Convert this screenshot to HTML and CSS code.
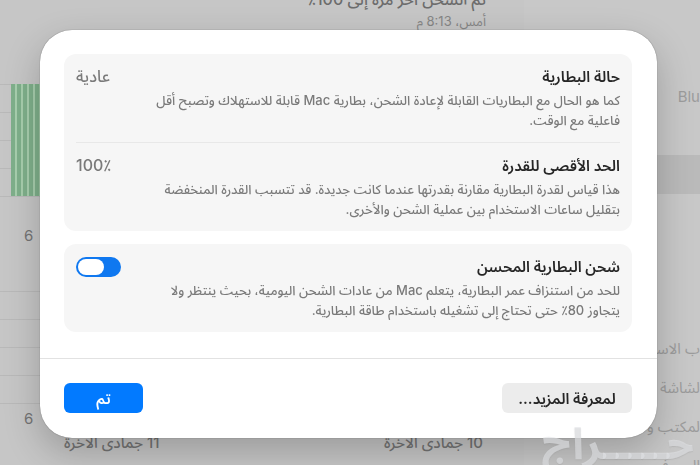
FILE: index.html
```html
<!DOCTYPE html>
<html lang="ar" dir="rtl">
<head>
    <meta charset="UTF-8">
    <meta name="viewport" content="width=device-width, initial-scale=1.0">
    <title>صحة البطارية</title>
    <link rel="stylesheet" href="styles.css">
</head>
<body>
    <div class="window">
        <nav class="sidebar">
            <ul class="group">
                <li class="item">Blu</li>
                <li class="item"></li>
                <li class="item selected"></li>
            </ul>
            <ul class="group group-wide">
                <li class="item">ب الاستخدام</li>
                <li class="item">لشاشة</li>
                <li class="item">لمكتب و</li>
                <li class="item">السيرفر</li>
            </ul>
        </nav>
        <main class="content">
            <div class="last-charge">تم الشحن آخر مرة إلى 100٪</div>
            <div class="last-time">أمس، 8:13 م</div>
            <div class="chart chart-level">
                <div class="bars"></div>
            </div>
            <div class="hours">6</div>
            <div class="chart chart-usage"></div>
            <div class="hours">6</div>
            <div class="dates">
                <span>10 جمادى الآخرة</span>
                <span>11 جمادى الآخرة</span>
            </div>
        </main>
    </div>

    <div class="overlay">
        <div class="dialog" role="dialog" aria-label="صحة البطارية">
            <div class="dialog-body">
                <section class="card">
                    <div class="row">
                        <div class="row-head">
                            <h2 class="title">حالة البطارية</h2>
                            <span class="value">عادية</span>
                        </div>
                        <p class="text">كما هو الحال مع البطاريات القابلة لإعادة الشحن، بطارية Mac قابلة للاستهلاك وتصبح أقل<br>فاعلية مع الوقت.</p>
                    </div>
                    <div class="row">
                        <div class="row-head">
                            <h2 class="title">الحد الأقصى للقدرة</h2>
                            <span class="value">100٪</span>
                        </div>
                        <p class="text">هذا قياس لقدرة البطارية مقارنة بقدرتها عندما كانت جديدة. قد تتسبب القدرة المنخفضة<br>بتقليل ساعات الاستخدام بين عملية الشحن والأخرى.</p>
                    </div>
                </section>
                <section class="card">
                    <div class="row">
                        <div class="row-head">
                            <label class="title" for="optimized">شحن البطارية المحسن</label>
                            <input class="switch" type="checkbox" id="optimized" checked>
                        </div>
                        <p class="text">للحد من استنزاف عمر البطارية، يتعلم Mac من عادات الشحن اليومية، بحيث ينتظر ولا<br>يتجاوز 80٪ حتى تحتاج إلى تشغيله باستخدام طاقة البطارية.</p>
                    </div>
                </section>
            </div>
            <div class="dialog-footer">
                <button class="btn btn-more" type="button">لمعرفة المزيد...</button>
                <button class="btn btn-done" type="button">تم</button>
            </div>
        </div>
    </div>

    <div class="watermark">حـــــراج</div>
</body>
</html>
```

FILE: styles.css
```css
* {
    margin: 0;
    padding: 0;
    box-sizing: border-box;
}

body {
    font-family: Inter, "Noto Sans Arabic", "DejaVu Sans", sans-serif;
    font-size: 15px;
    height: 100vh;
    overflow: hidden;
    background: #c6c6c6;
    color: #747474;
}

.window {
    display: flex;
    height: 100vh;
    overflow: hidden;
}

/* sidebar */
.sidebar {
    width: 176px;
    flex-shrink: 0;
    padding-top: 77px;
    background: #c8c8c8;
}

.group {
    list-style: none;
}

.group-wide {
    padding-top: 135px;
}

.item {
    height: 39px;
    line-height: 39px;
    font-size: 15px;
    color: #9c9c9c;
    white-space: nowrap;
}

.selected {
    background: #bababa;
}

/* battery page behind the dialog */
.content {
    flex: 1;
    min-width: 0;
}

.last-charge {
    height: 24px;
    line-height: 24px;
    margin-top: -13px;
    padding-right: 38px;
    font-size: 16px;
    font-weight: 500;
    color: #6c6c6c;
}

.last-time {
    height: 20px;
    line-height: 20px;
    padding-right: 38px;
    font-size: 13px;
    color: #858585;
}

.chart {
    height: 113px;
    background: repeating-linear-gradient(#b9b9b9 0 1px, transparent 1px 28px);
}

.chart-level {
    margin-top: 53px;
    padding-left: 11px;
    direction: ltr;
}

.chart-usage {
    margin-top: 45px;
}

.bars {
    width: 50%;
    height: 112px;
    background: repeating-linear-gradient(90deg, #7fb08b 0 4px, #a8cfae 4px 6px);
}

.hours {
    direction: ltr;
    height: 29px;
    line-height: 30px;
    padding-left: 24px;
    font-size: 15px;
}

.chart-level + .hours {
    margin-top: 24px;
    height: 25px;
}

.dates {
    display: flex;
    justify-content: space-between;
    padding: 0 41px 0 64px;
    line-height: 20px;
    font-weight: 500;
}

/* dialog */
.overlay {
    position: fixed;
    inset: 0;
    padding: 30px 43px 27px 40px;
}

.dialog {
    border-radius: 32px;
    background: #fff;
    box-shadow: 0 0 1px rgba(0, 0, 0, 0.6), 0 14px 36px rgba(0, 0, 0, 0.22);
}

.dialog-body {
    display: flex;
    flex-direction: column;
    gap: 13px;
    padding: 24px 25px 26px 24px;
}

.card {
    border-radius: 12px;
    background: #f6f6f6;
    padding: 0 12px;
}

.row {
    padding: 13px 0 12px;
}

.row + .row {
    border-top: 1px solid #e8e8e8;
}

.row-head {
    display: flex;
    justify-content: space-between;
    align-items: center;
    height: 20px;
    margin-bottom: 3px;
}

.title {
    font-size: 15px;
    font-weight: 600;
    color: #262626;
}

.value {
    font-size: 16px;
    font-weight: 500;
    color: #7a7a7a;
}

.text {
    font-size: 13px;
    font-weight: 500;
    line-height: 20px;
    color: #7a7a7a;
    white-space: nowrap;
}

.switch {
    appearance: none;
    display: flex;
    justify-content: flex-start;
    width: 45px;
    height: 20px;
    padding: 2px;
    border-radius: 10px;
    background: #0f78f0;
}

.switch::before {
    content: "";
    width: 26px;
    height: 16px;
    border-radius: 8px;
    background: #fff;
}

.switch:checked {
    justify-content: flex-end;
}

.dialog-footer {
    display: flex;
    justify-content: space-between;
    padding: 24px 25px 25px 24px;
    border-top: 1px solid #e2e2e2;
}

.btn {
    height: 30px;
    border: none;
    border-radius: 6px;
    font-family: inherit;
    font-size: 15px;
    font-weight: 600;
}

.btn-more {
    width: 130px;
    background: #ececec;
    color: #262626;
}

.btn-done {
    width: 79px;
    background: #027aff;
    color: #fff;
}

.watermark {
    position: fixed;
    right: 6px;
    bottom: 0;
    font-size: 44px;
    line-height: 44px;
    font-weight: bold;
    color: rgba(226, 228, 232, 0.6);
    text-shadow: 0 1px 1px rgba(150, 150, 150, 0.3);
    pointer-events: none;
}
```
